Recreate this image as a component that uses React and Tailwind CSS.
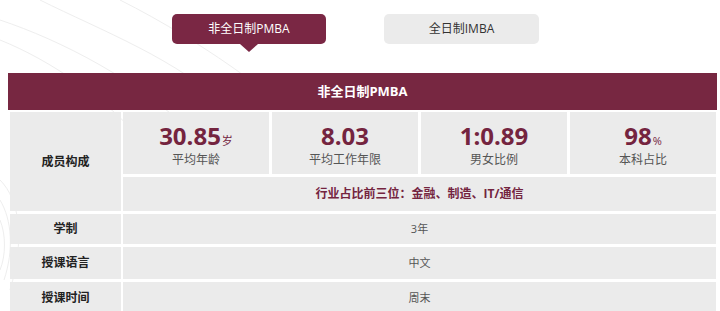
const font = { fontFamily: '"Open Sans", "Noto Sans CJK SC", sans-serif' };

const stats = [
	{ value: "30.85", unit: "岁", label: "平均年龄" },
	{ value: "8.03", unit: "", label: "平均工作年限" },
	{ value: "1:0.89", unit: "", label: "男女比例" },
	{ value: "98", unit: "%", label: "本科占比" },
];

const rows = [
	{ label: "学制", value: "3年", h: "h-[30px]" },
	{ label: "授课语言", value: "中文", h: "h-[32px]" },
	{ label: "授课时间", value: "周末", h: "h-[32px]" },
];

export default function App() {
	return (
		<div
			className="relative w-[720px] h-[311px] overflow-hidden bg-white text-[#333]"
			style={font}
		>
			{/* faint decorative lines */}
			<svg
				className="absolute left-0 top-0 pointer-events-none"
				width="720"
				height="311"
				fill="none"
				stroke="#eeeeee"
				strokeWidth="1"
			>
				<path d="M0 20 C60 40 140 80 200 140" />
				<path d="M0 40 C50 60 110 100 150 150" />
				<path d="M40 0 C100 30 180 60 230 110" />
				<path d="M120 0 C160 20 210 50 250 80" />
				<path d="M0 180 C20 200 25 240 10 290" />
				<path d="M0 200 C12 220 14 250 4 280" />
				<path d="M0 220 C6 235 6 255 0 270" />
			</svg>

			<div className="relative flex flex-col">
				{/* tabs */}
				<div className="flex gap-[58px] pl-[172px] pt-[14px] h-[73px]">
					<div className="relative w-[154px] h-[30px] rounded-[5px] bg-[#7a2744] text-white text-[12px] flex items-center justify-center">
						非全日制PMBA
						<span className="absolute left-1/2 -translate-x-1/2 top-[30px] w-0 h-0 border-l-[9px] border-r-[9px] border-t-[8px] border-l-transparent border-r-transparent border-t-[#7a2744]" />
					</div>
					<div className="w-[155px] h-[30px] rounded-[5px] bg-[#ebebeb] text-[#333] text-[12px] flex items-center justify-center">
						全日制IMBA
					</div>
				</div>

				{/* table */}
				<div className="ml-[8px] w-[709px] flex flex-col">
					<div className="h-[37px] bg-[#772741] text-white text-[13px] font-bold flex items-center justify-center">
						非全日制PMBA
					</div>

					<div className="flex gap-[2px] pl-[2px] pt-[2px]">
						<div className="w-[111px] h-[99px] bg-[#ebebeb] flex items-center justify-center text-[12px] font-bold text-[#222]">
							成员构成
						</div>
						<div className="w-[593px] flex flex-col gap-[3px]">
							<div className="grid grid-cols-4 gap-[3px] h-[62px]">
								{stats.map((s) => (
									<div
										key={s.label}
										className="bg-[#ebebeb] flex flex-col items-center justify-center"
									>
										<div className="flex items-baseline h-[33px] leading-[33px]">
											<span className="text-[24px] leading-[33px] font-bold text-[#74243f]">
												{s.value}
											</span>
											{s.unit && (
												<span className="text-[11px] leading-[16px] text-[#74243f] ml-[1px]">
													{s.unit}
												</span>
											)}
										</div>
										<div className="text-[12px] text-[#555] leading-[15px]">
											{s.label}
										</div>
									</div>
								))}
							</div>
							<div className="h-[34px] bg-[#ebebeb] flex items-center justify-center text-[12px] font-bold text-[#74243f]">
								行业占比前三位：金融、制造、IT/通信
							</div>
						</div>
					</div>

					{rows.map((r) => (
						<div key={r.label} className="flex gap-[2px] pl-[2px] pt-[3px]">
							<div
								className={`w-[111px] ${r.h} bg-[#ebebeb] flex items-center justify-center text-[12px] font-bold text-[#222]`}
							>
								{r.label}
							</div>
							<div
								className={`w-[593px] ${r.h} bg-[#ebebeb] flex items-center justify-center text-[11px] text-[#555]`}
							>
								{r.value}
							</div>
						</div>
					))}
				</div>
			</div>
		</div>
	);
}
